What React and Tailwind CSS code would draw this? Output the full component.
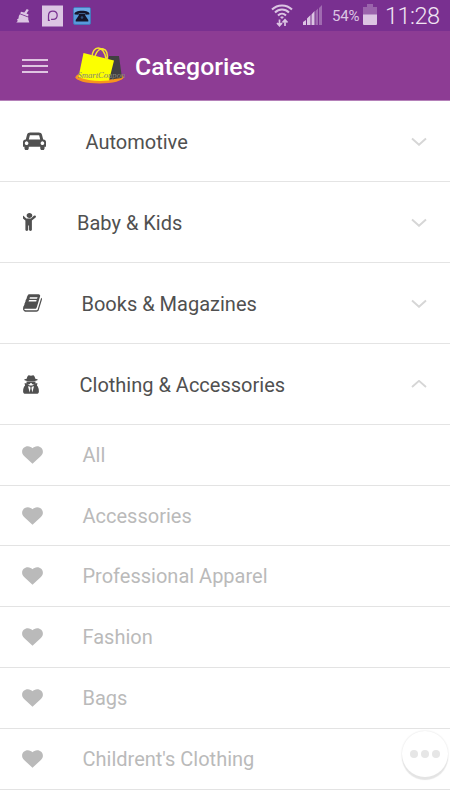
import { useState } from 'react'

const CarIcon = () => (
  <svg viewBox="0 128 2048 1536" className="w-[23px] h-[18px]" fill="currentColor">
    <path d="M480 1088q0-66-47-113t-113-47-113 47-47 113 47 113 113 47 113-47 47-113zm36-320h1016l-89-357q-2-8-14-17.500t-21-9.500h-768q-9 0-21 9.500t-14 17.500zm1372 320q0-66-47-113t-113-47-113 47-47 113 47 113 113 47 113-47 47-113zm160-96v384q0 14-9 23t-23 9h-96v128q0 80-56 136t-136 56-136-56-56-136v-128h-1024v128q0 80-56 136t-136 56-136-56-56-136v-128h-96q-14 0-23-9t-9-23v-384q0-93 65.500-158.500t158.500-65.500h28l105-419q23-94 104-157.500t179-63.500h768q98 0 179 63.500t104 157.500l105 419h28q93 0 158.500 65.500t65.500 158.500z" />
  </svg>
)

const ChildIcon = () => (
  <svg viewBox="384 160 1024 1624" preserveAspectRatio="none" className="w-[13px] h-[18px]" fill="currentColor">
    <path d="M1380 419q28 28 28 68t-28 68l-292 292v824q0 46-33 79t-79 33-79-33-33-79v-384h-64v384q0 46-33 79t-79 33-79-33-33-79v-824l-292-292q-28-28-28-68t28-68q29-28 68.500-28t67.500 28l228 228h368l228-228q28-28 68-28t68 28zm-260-35q0 93-65.500 158.500t-158.500 65.500-158.500-65.500-65.500-158.500 65.500-158.500 158.500-65.500 158.500 65.500 65.500 158.500z" transform="translate(-4 0)" />
  </svg>
)

const BookIcon = () => (
  <svg viewBox="62 128 1668 1536" className="w-[19px] h-[18px]" fill="currentColor">
    <path d="M1703 478q40 57 18 129l-275 906q-19 64-76.500 107.500t-122.500 43.500h-923q-77 0-148.500-53.500t-99.500-131.500q-24-67-2-127 0-4 3-27t4-37q1-8-3-21.500t-3-19.500q2-11 8-21t16.500-23.500 16.500-23.500q23-38 45-91.500t30-91.500q3-10 .5-30t-.5-28q3-11 17-28t17-23q21-36 42-92t25-90q1-9-2.500-32t.5-28q4-13 22-30.500t22-22.500q19-26 42.500-84.500t27.500-96.500q1-8-3-25.500t-2-26.500q2-8 9-18t18-23 17-21q8-12 16.500-30.500t15-35 16-36 19.500-32 26.500-23.500 36-11.500 47.500 5.500l-1 3q38-9 51-9h761q74 0 114 56t18 130l-274 906q-36 119-71.500 153.500t-128.500 34.500h-869q-27 0-38 15-11 16-1 43 24 70 144 70h923q29 0 56-15.500t35-41.500l300-987q7-22 5-57 38 15 59 43zm-1064 2q-4 13 2 22.500t20 9.500h608q13 0 25.500-9.500t16.500-22.500l21-64q4-13-2-22.500t-20-9.500h-608q-13 0-25.500 9.500t-16.500 22.500zm-83 256q-4 13 2 22.500t20 9.500h608q13 0 25.500-9.500t16.500-22.500l21-64q4-13-2-22.500t-20-9.500h-608q-13 0-25.500 9.500t-16.500 22.500z" />
  </svg>
)

const SecretIcon = () => (
  <svg viewBox="0 0 16 19" className="w-[16px] h-[19px]" fill="currentColor">
    {/* hat */}
    <path d="M3.700 3.700C4.200 1.500 4.900.200 5.900.200c.8 0 1.300.5 2.100.5S9.300.200 10.100.200c1 0 1.700 1.300 2.200 3.500 1.700.3 2.500.7 2.500 1.100 0 .8-3 1.500-6.800 1.500S1.200 5.600 1.200 4.800c0-.4.8-.8 2.500-1.100z" />
    {/* glasses */}
    <path d="M3.500 6.500h9v1c0 1.200-.9 1.900-2.200 1.900-1 0-1.500-.5-1.800-1.300h-1c-.3.800-.8 1.300-1.800 1.300-1.300 0-2.200-.7-2.200-1.900z" />
    {/* coat */}
    <path d="M1.500 8.200H4C5 9.800 6.500 10.600 8 10.600s3-.8 4-2.400h2.500l-.6 2.300c1.400 1.100 2 3.300 2 6 0 1.500-.9 2.300-2.300 2.300H2.400C1 18.800.100 18 .100 16.500c0-2.700.6-4.900 2-6z" />
    {/* shirt and tie */}
    <path d="M5 11.200 7.300 11.800l.2 1.500-.8 4.200zM11 11.200 8.700 11.800l-.2 1.500.8 4.200z" fill="#fff" />
  </svg>
)

const HeartIcon = () => (
  <svg viewBox="0 0 20 18" className="w-[21px] h-[18px]" fill="currentColor" preserveAspectRatio="none">
    <path d="M14.500.300C12.600.300 10.900 1.300 10 2.300 9.100 1.300 7.400.300 5.500.300 2.500.300.100 2.700.100 5.700c0 1.700.7 3.100 1.900 4.300l8 7.800 8-7.800c1.200-1.200 1.900-2.600 1.900-4.300 0-3-2.400-5.400-5.400-5.400z" />
  </svg>
)

const Chevron = ({ open }) => (
  <svg viewBox="0 0 16 9" className="w-4 h-[9px]" fill="none" stroke="#d6d6d6" strokeWidth="1.900">
    <path d={open ? 'M1 7 8 .900 15 7' : 'M1 1.500 8 7.800 15 1.500'} />
  </svg>
)

const categories = [
  { name: 'Automotive', icon: CarIcon, pad: 'pl-[63px]' },
  { name: 'Baby & Kids', icon: ChildIcon, pad: 'pl-[54.500px]' },
  { name: 'Books & Magazines', icon: BookIcon, pad: 'pl-[59px]' },
  { name: 'Clothing & Accessories', icon: SecretIcon, pad: 'pl-[57px]' },
]

const clothing = [
  { name: 'All', height: 'h-[61px]' },
  { name: 'Accessories', height: 'h-[60px]' },
  { name: 'Professional Apparel', height: 'h-[61px]' },
  { name: 'Fashion', height: 'h-[61px]' },
  { name: 'Bags', height: 'h-[61px]' },
  { name: "Childrent's Clothing", height: 'h-[61px]' },
]

function StatusBar() {
  return (
    <div className="h-[31px] bg-[#793090] flex items-center text-[#dcc5e3]">
      {/* Notifications */}
      <svg viewBox="0 0 14 14" className="w-[14px] h-[14px] ml-4" fill="currentColor">
        <path d="M10.800 0 12.800 1 10.500 4.500 12.500 5.500 12 7.500 4.200 4.500 5 2.800 8.300 3.600z" />
        <path d="M4 5.300 12.300 8.500v2l1 3.100H.200c1.800-.8 1.600-2.500.8-3.600.8.300 1.500 0 1.600-.9 0-1.300.4-2.800 1.400-3.800z" />
      </svg>
      <svg viewBox="0 0 22 22" className="w-[21px] h-[22px] ml-3" fill="none">
        <rect width="22" height="22" fill="#dcc5e3" />
        <path d="M8.200 15.500H6.800v-4.700c0-3 1.800-4.900 4.600-4.900 2.700 0 4.500 1.700 4.500 4.400s-1.800 4.300-4.300 4.300H9.500" stroke="#793090" strokeWidth="1.300" />
      </svg>
      <svg viewBox="0 0 18 18" className="w-[18px] h-[18px] ml-[10px]">
        <rect x=".5" y=".5" width="17" height="17" rx="1.500" fill="#5799dc" stroke="#4778bb" />
        <path d="M1 1h16v7H1z" fill="#83baf0" opacity=".5" />
        <path d="M1.500 7.500C1 4.800 4.500 3.700 9 3.700s8 1.100 7.500 3.800l-4 .3-.4-1.700H6l-.5 1.700z" fill="#15152b" />
        <path d="M6 6.500h6l.3 2 3 4.500v1.500H2.700V13l3-4.500z" fill="#15152b" />
        <circle cx="9" cy="10.500" r="1.300" fill="#30507d" />
      </svg>

      {/* Connection, battery, clock */}
      <svg viewBox="0 0 22 24" className="w-[22px] h-6 ml-auto mt-[-2px]" fill="none" stroke="currentColor">
        <path d="M1 6.500C6.500 1 15.500 1 21 6.500M4 9.500c4-4 10-4 14 0M7 12.500c2.300-2.300 5.700-2.300 8 0" strokeWidth="2" />
        <path d="M9.700 14 11 15.500l1.300-1.500z" fill="currentColor" />
        <path d="M8.500 16.500v6M6 20l2.500 2.700L11 20M14 23v-6M11.500 19.500l2.500-2.700 2.500 2.700" strokeWidth="1.700" />
      </svg>
      <svg viewBox="0 0 21 21" className="w-[21px] h-[21px] ml-[9px]" fill="currentColor">
        <path d="M1 20v-3l3-2v5zM5 20v-6.500L8.500 10v10zM9.500 20V9.500L12.500 6v14z" />
        <path d="M13.500 20V6L16 3.500V20zM17 20V3l3-3v20z" opacity=".4" />
      </svg>
      <span className="ml-[9px] mt-px w-[27px] text-[15px] leading-none tracking-[-0.2px] whitespace-nowrap">54%</span>
      <svg viewBox="0 0 14 21" className="w-[14px] h-[21px] ml-[4px] mt-[-2px]" fill="currentColor">
        <path d="M0 3h4V0h6v3h4v8H0z" opacity=".35" />
        <path d="M0 10.500h14V20a1 1 0 0 1-1 1H1a1 1 0 0 1-1-1z" />
      </svg>
      <span className="ml-[8px] mr-[11px] mt-[2px] w-[54px] text-[23.5px] leading-none tracking-[-0.5px] whitespace-nowrap font-light text-[#f0e4f3]">11:28</span>
    </div>
  )
}

function Logo() {
  return (
    <svg viewBox="0 0 50 40" className="w-[50px] h-10" fill="none">
      <ellipse cx="24.500" cy="31.200" rx="24" ry="6.300" fill="#f7941e" />
      <path d="M34 10h10l3 22-16 2z" fill="#414042" />
      <path d="M8.500 7 39 14.500 34 34.500C24 35.500 12 35 3.500 31z" fill="#fcff00" />
      <path d="M17 11.500C17-1 29-2 31 13M20 10C24-1 34 1 32 14" stroke="#f7e52a" strokeWidth="1.500" />
      <text x="2.500" y="32" fontFamily="Liberation Serif, serif" fontStyle="italic" fontSize="8.600" fill="#85847a">SmartCoupon</text>
    </svg>
  )
}

function App() {
  const [openCategory, setOpenCategory] = useState('Clothing & Accessories')

  return (
    <div className="relative w-full h-[800px] overflow-hidden bg-white font-[Roboto,sans-serif]">
      <StatusBar />

      <header className="h-[70px] bg-[#8d3c94] border-b border-[#b581b9] flex items-center">
        <button className="ml-[22px] mt-px flex flex-col gap-[4px]" aria-label="Menu">
          <span className="w-[26px] h-[2px] bg-[#dfc5e1]" />
          <span className="w-[26px] h-[2px] bg-[#dfc5e1]" />
          <span className="w-[26px] h-[2px] bg-[#dfc5e1]" />
        </button>
        <div className="ml-[27px] mt-px"><Logo /></div>
        <h1 className="ml-[10px] mt-[3px] text-[24.800px] font-medium text-white">Categories</h1>
      </header>

      <main>
        {categories.map(({ name, icon: Icon, pad }) => (
          <div key={name}>
            <button
              onClick={() => setOpenCategory(openCategory === name ? null : name)}
              className="w-full h-[81px] pl-[22.500px] pr-[23px] border-b border-[#e4e4e4] flex items-center text-[#505050]"
            >
              <div className="w-0 overflow-visible"><div className="w-6"><Icon /></div></div>
              <span className={`${pad} mt-px text-[20px]`}>{name}</span>
              <span className="ml-auto mt-px"><Chevron open={openCategory === name} /></span>
            </button>
            {openCategory === name && name === 'Clothing & Accessories' && clothing.map((item) => (
              <div key={item.name} className={`${item.height} pl-[22px] border-b border-[#e3e3e3] flex items-center text-[#bababa]`}>
                <HeartIcon />
                <span className="ml-[39.500px] text-[20px]">{item.name}</span>
              </div>
            ))}
          </div>
        ))}
      </main>

      {/* Floating action button */}
      <button className="absolute left-[402px] top-[731px] w-[46px] h-[46px] rounded-full bg-white shadow-[0_3px_1px_#e4e4e4,0_0_2px_#dddddd] flex items-center justify-center gap-[3px]" aria-label="More">
        <span className="w-2 h-2 rounded-full bg-[#e6e6e6]" />
        <span className="w-2 h-2 rounded-full bg-[#e6e6e6]" />
        <span className="w-2 h-2 rounded-full bg-[#e6e6e6]" />
      </button>
    </div>
  )
}

export default App
